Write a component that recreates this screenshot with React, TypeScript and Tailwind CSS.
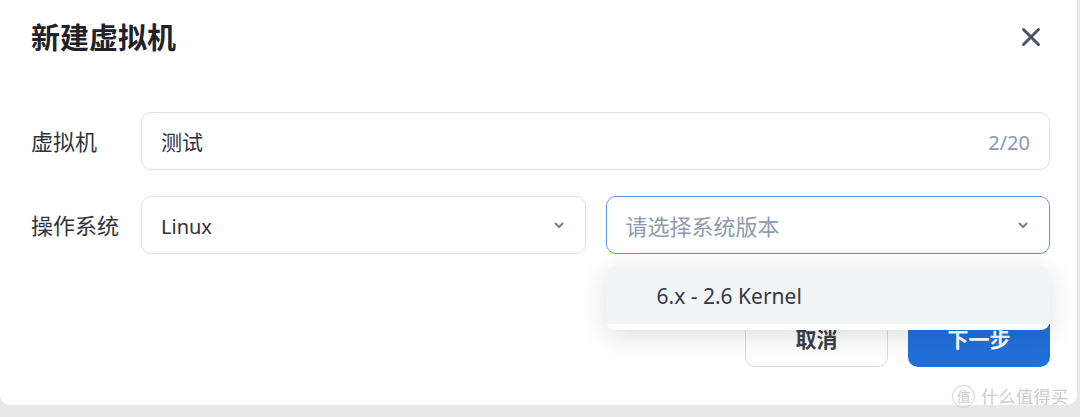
import React from "react";

const font = { fontFamily: '"Noto Sans", "Noto Sans CJK SC", sans-serif' };

function Chevron() {
  return (
    <svg width="14" height="14" viewBox="0 0 14 14" fill="none">
      <path d="M3.5 5.5 L7 9 L10.5 5.5" stroke="#6b7a90" strokeWidth="1.8" strokeLinecap="round" strokeLinejoin="round" />
    </svg>
  );
}

export default function App() {
  return (
    <div className="w-[1080px] h-[417px] bg-[#e8e8e8] overflow-hidden relative" style={font}>
      <div className="w-[1077px] h-[405px] bg-white rounded-b-[10px] flex flex-col pl-[31px] pr-[27px] pb-[38px]">
        <div className="h-[74px] flex items-center justify-between">
          <div className="text-[29px] font-bold text-[#1f2329] leading-none">新建虚拟机</div>
          <svg width="22" height="22" viewBox="0 0 22 22" className="mr-[8px]">
            <path d="M3.5 3.5 L18.5 18.5 M18.5 3.5 L3.5 18.5" stroke="#4a5568" strokeWidth="3" strokeLinecap="round" />
          </svg>
        </div>

        <div className="mt-[38px] flex items-center">
          <div className="w-[110px] text-[22px] text-[#2f3540] leading-none">虚拟机</div>
          <div className="flex-1 h-[58px] border border-[#d9e1eb] rounded-[10px] flex items-center justify-between pl-[19px] pr-[19px] pt-[3px]">
            <span className="text-[21px] text-[#2b303a]">测试</span>
            <span className="text-[20px] text-[#8b9ab0]">2/20</span>
          </div>
        </div>

        <div className="mt-[26px] flex items-center">
          <div className="w-[110px] text-[22px] text-[#2f3540] leading-none">操作系统</div>
          <div className="flex-1 grid grid-cols-2 gap-[20px]">
            <div className="h-[58px] border border-[#d9e1eb] rounded-[10px] flex items-center justify-between pl-[19px] pr-[19px]">
              <span className="text-[20px] text-[#2b303a] pt-[3px]">Linux</span>
              <Chevron />
            </div>
            <div className="relative">
              <div className="h-[58px] border border-[#5b95e8] rounded-[10px] flex items-center justify-between pl-[19px] pr-[19px]">
                <span className="text-[22px] text-[#8d9bb1] pt-[2px]">请选择系统版本</span>
                <Chevron />
              </div>
              <div className="absolute left-0 right-0 top-[70px] z-10 bg-white rounded-[9px] pb-[6px] shadow-[0_6px_28px_rgba(0,0,0,0.13)]">
                <div className="h-[58px] bg-[#f3f4f6] rounded-t-[9px] flex items-center pl-[51px] pt-[3px] text-[21px] text-[#333a45]">
                  6.x - 2.6 Kernel
                </div>
              </div>
            </div>
          </div>
        </div>

        <div className="mt-auto flex justify-end gap-[20px]">
          <button className="w-[143px] h-[54px] border border-[#d3dbe6] rounded-[10px] bg-white text-[21px] font-bold text-[#3a404b]">
            取消
          </button>
          <button className="w-[142px] h-[54px] rounded-[10px] bg-[#2170d9] text-[21px] font-bold text-white">
            下一步
          </button>
        </div>
      </div>

      <div className="absolute left-[952px] top-[385px] flex items-center gap-[6px] text-[#cccccc]">
        <div className="w-[23px] h-[23px] rounded-full border-[1.5px] border-[#d2d2d2] flex items-center justify-center text-[14px] leading-none">值</div>
        <span className="text-[17px] leading-none tracking-[0.5px]">什么值得买</span>
      </div>
    </div>
  );
}
